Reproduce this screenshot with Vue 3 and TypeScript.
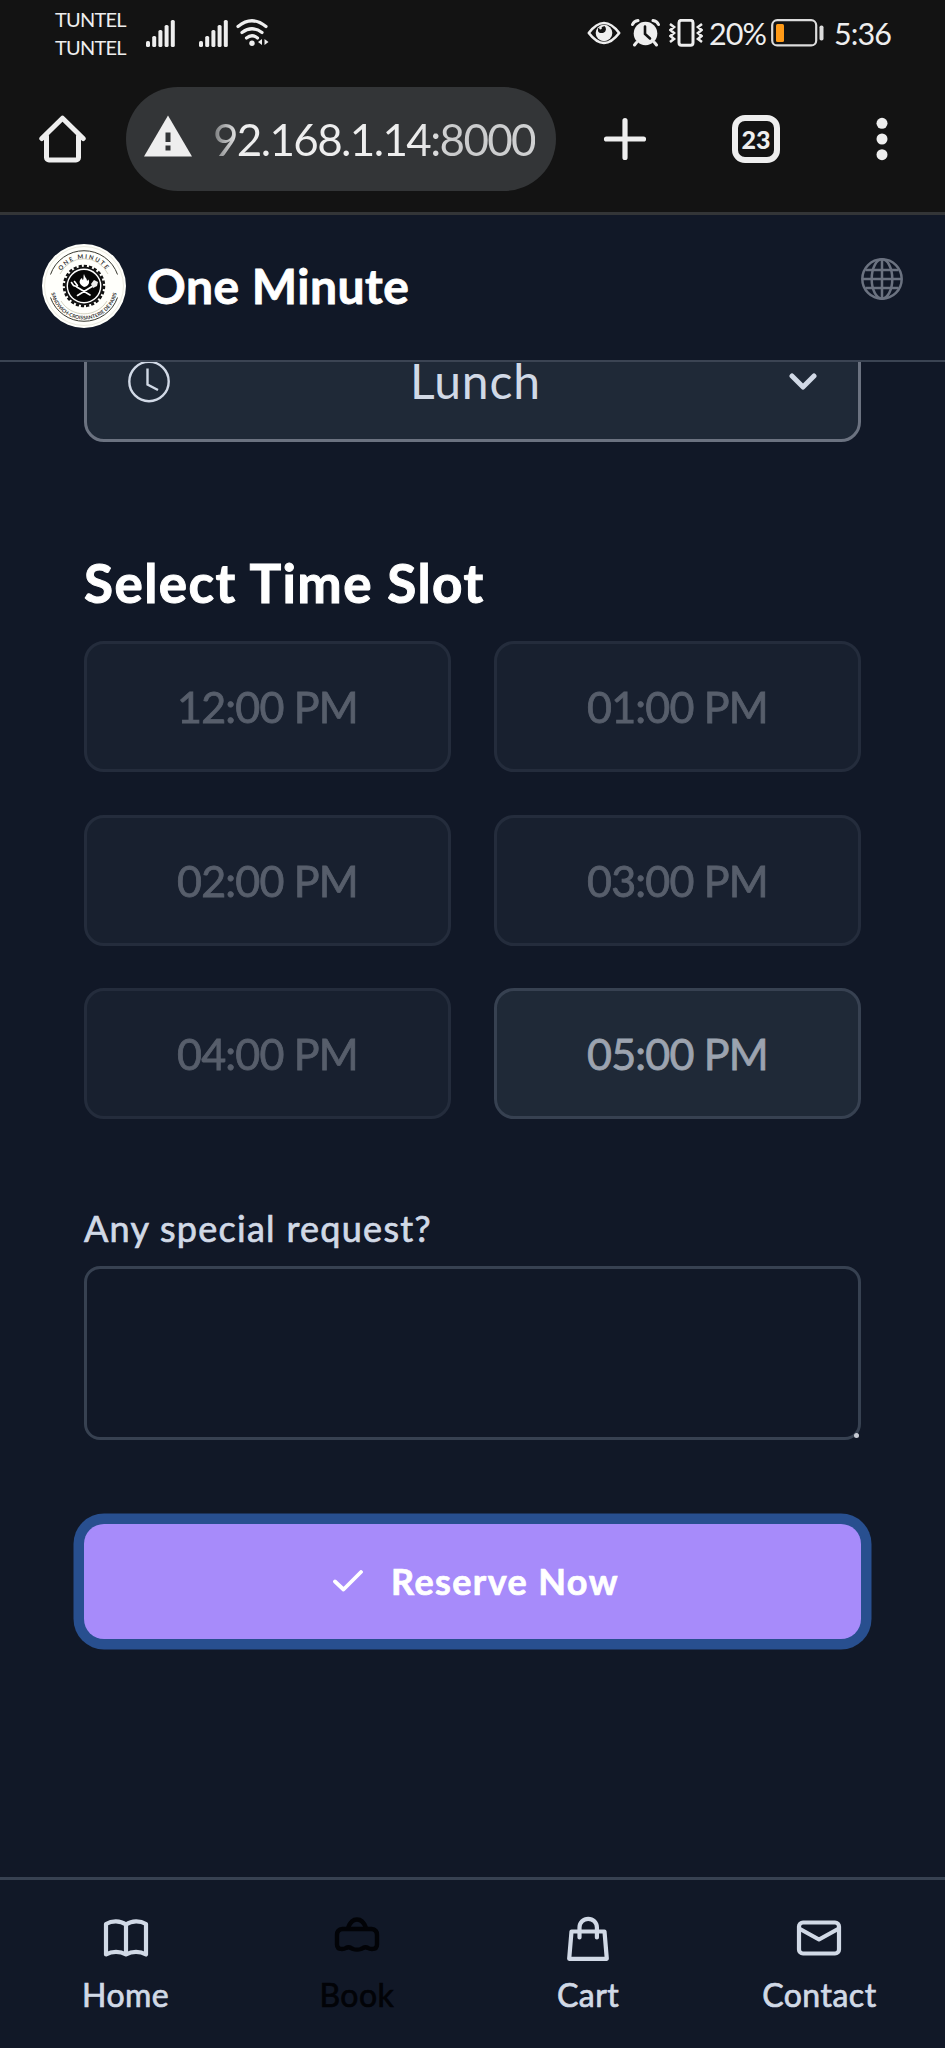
<script setup lang="ts">
import { ref } from 'vue'

interface Slot {
  label: string
  available: boolean
}

const slots: Slot[] = [
  { label: '12:00 PM', available: false },
  { label: '01:00 PM', available: false },
  { label: '02:00 PM', available: false },
  { label: '03:00 PM', available: false },
  { label: '04:00 PM', available: false },
  { label: '05:00 PM', available: true },
]

const note = ref('')
const signalBars = [6, 11, 17, 22, 27]
</script>

<template>
  <div class="screen">
    <div class="status">
      <div class="carriers"><span>TUNTEL</span><span>TUNTEL</span></div>
      <svg v-for="n in 2" :key="n" class="signal" width="29" height="27" viewBox="0 0 29 27">
        <rect v-for="(h, i) in signalBars" :key="i" :x="i * 6.2" :y="27 - h" width="4" :height="h" rx="1.6" fill="#eee" />
      </svg>
      <svg class="wifi" width="34" height="28" viewBox="0 0 34 28" fill="none" stroke="#eee" stroke-width="3.2" stroke-linecap="round">
        <path d="M2 7.5Q16 -4 30 7.5M6 13.5Q16 6 26 13.5M10.500 19Q16 14.500 21.500 19" />
        <circle cx="16" cy="24.300" r="2.700" fill="#eee" stroke="none" />
        <path d="M26 20v6l-4-3zM28.500 20v6l4-3z" fill="#eee" stroke="none" />
      </svg>
      <div class="grow"></div>
      <svg class="eye" width="34" height="24" viewBox="0 0 34 24">
        <path d="M1.800 12Q17-8 32.200 12Q17 32 1.800 12Z" fill="none" stroke="#eee" stroke-width="2.600" stroke-linejoin="round" />
        <circle cx="17" cy="12" r="8.300" fill="#eee" />
        <path d="M11 7.500a4 4 0 1 0 6.500-2.500" fill="#131313" />
        <circle cx="14" cy="9" r="3" fill="#131313" /><circle cx="13.500" cy="7" r="1.400" fill="#eee" />
      </svg>
      <svg class="alarm" width="30" height="28" viewBox="0 0 30 28">
        <circle cx="14.500" cy="14.500" r="11.800" fill="#eee" />
        <path d="M1.500 5.500Q3 2 7 1.500M22 1.500Q26 2 27.500 5.500M5.500 23.500l-2 2.500M23.500 23.500l2 2.500" fill="none" stroke="#eee" stroke-width="3" stroke-linecap="round" />
        <path d="M14 7.500v7.500l5 4.500" fill="none" stroke="#131313" stroke-width="2.600" stroke-linecap="round" />
      </svg>
      <svg class="vibrate" width="34" height="28" viewBox="0 0 34 28" fill="none" stroke="#eee">
        <rect x="10" y="1.300" width="14" height="25" rx="2.500" stroke-width="3" />
        <path d="M1 5l4 3-3.500 3 3.500 3-3.500 3 3.500 3-4 3M33 5l-4 3 3.500 3-3.500 3 3.500 3-3.500 3 4 3" stroke-width="2.600" />
      </svg>
      <span class="percent">20%</span>
      <svg class="battery" width="54" height="28" viewBox="0 0 54 28">
        <rect x="1.200" y="1.200" width="44" height="25.200" rx="5" fill="none" stroke="#dcdcdc" stroke-width="2.200" />
        <rect x="5" y="5" width="8" height="18" rx="1.500" fill="#ff9a17" />
        <rect x="48.500" y="6.500" width="4" height="15" rx="1.800" fill="#dcdcdc" />
      </svg>
      <span class="clock">5:36</span>
    </div>

    <div class="toolbar">
      <svg class="home" width="48" height="48" viewBox="0 0 48 48" fill="none" stroke="#eee" stroke-width="5" stroke-linecap="round" stroke-linejoin="round">
        <path d="M2.800 23.500L23.500 3.200 44.200 23.500M7.500 21v21.500a2.500 2.500 0 0 0 2.500 2.500h27a2.500 2.500 0 0 0 2.500-2.500V21" />
      </svg>
      <div class="address">
        <svg width="48" height="42" viewBox="0 0 48 42">
          <path d="M24 .500L48 41.500H0z" fill="#eee" />
          <path d="M21.500 17.500h5v9.500h-5zM21.500 30.500h5v5h-5z" fill="#333537" />
        </svg>
        <span class="url">92.168.1.14:8000</span>
      </div>
      <svg class="plus" width="44" height="44" viewBox="0 0 44 44" stroke="#eee" stroke-width="5.200" stroke-linecap="round">
        <path d="M22 3.500v37M3.500 22h37" />
      </svg>
      <div class="tabs">23</div>
      <svg class="dots" width="12" height="44" viewBox="0 0 12 44" fill="#eee">
        <circle cx="6" cy="6.300" r="5.500" /><circle cx="6" cy="22" r="5.500" /><circle cx="6" cy="37.700" r="5.500" />
      </svg>
    </div>

    <header class="header">
      <svg class="logo" width="84" height="84" viewBox="0 0 84 84">
        <defs>
          <path id="arc-top" d="M14.500 42a27.500 27.500 0 0 1 55 0" />
          <path id="arc-bottom" d="M8.500 42a33.500 33.500 0 0 0 67 0" />
        </defs>
        <circle cx="42" cy="42" r="42" fill="#fffffb" />
        <g fill="none" stroke-width="1">
          <path d="M8.500 30.500a35.500 35.500 0 0 1 67 0M8.500 53.500a35.500 35.500 0 0 0 67 0" stroke="#38382f" />
          <path d="M18 30a26.500 26.500 0 0 1 48 0M19 57a27 27 0 0 0 46 0" stroke="#c9c8b4" stroke-width=".8" />
          <circle cx="42" cy="42" r="39.500" stroke="#dddccc" stroke-width=".6" />
        </g>
        <circle cx="42" cy="42" r="20" fill="none" stroke="#111" stroke-width="2.500" stroke-dasharray="3.200 1.990" />
        <circle cx="42" cy="42" r="18.300" fill="#fff" stroke="#111" stroke-width="1.800" />
        <circle cx="42" cy="42" r="16" fill="#060606" />
        <g fill="none" stroke="#fff" stroke-width="1.600" stroke-linecap="round">
          <path d="M34 42.500L48 51M50 42.500L35.500 51.500M29.500 38.500l2 3 3 1M32.500 37.500l3 4" />
        </g>
        <path d="M49 40l3-4 4 2-1 4-4 2z" fill="#eee" />
        <path d="M42 43c-6-3-5-7-2-9 .5 2 1 2 1 2 1-2 0-4 1-6 1 4 3 4 3 7l1.500-1.500c2 4-1 7-4.500 7.500z" fill="#fff" />
        <text class="seal-top"><textPath href="#arc-top" startOffset="50%">ONE MINUTE</textPath></text>
        <text class="seal-bottom"><textPath href="#arc-bottom" startOffset="50%">SANDWICH-CROISSANTERIE DE PARIS</textPath></text>
      </svg>
      <h1>One Minute</h1>
      <svg class="globe" width="42" height="42" viewBox="0 0 42 42" fill="none" stroke="#6b7280" stroke-width="2.500">
        <circle cx="21" cy="21" r="19.700" />
        <ellipse cx="21" cy="21" rx="10.300" ry="19.700" />
        <path d="M21 1.300v39.400M1.300 21h39.400M4.500 12h33M4.500 30h33" />
      </svg>
    </header>

    <main class="content">
      <div class="select">
        <svg width="42" height="42" viewBox="0 0 42 42" fill="none" stroke="#d1d9e6" stroke-width="2.400">
          <circle cx="21" cy="20.500" r="19.700" />
          <path d="M19.500 7.500v16l10.500 5.500" />
        </svg>
        <span class="meal">Lunch</span>
        <svg width="28" height="18" viewBox="0 0 28 18" fill="none" stroke="#d1d9e6" stroke-width="5" stroke-linecap="round" stroke-linejoin="round">
          <path d="M3 3l11 11L25 3" />
        </svg>
      </div>

      <h2>Select Time Slot</h2>
      <div class="slots">
        <button v-for="s in slots" :key="s.label" class="slot" :class="{ off: !s.available }" :disabled="!s.available">
          {{ s.label }}
        </button>
      </div>

      <label class="ask" for="note">Any special request?</label>
      <div class="field">
        <textarea id="note" v-model="note"></textarea>
        <i class="grip"></i>
      </div>

      <button class="reserve">
        <svg width="30" height="22" viewBox="0 0 30 22" fill="none" stroke="#fff" stroke-width="3.800" stroke-linecap="round" stroke-linejoin="round">
          <path d="M2 11.500l8.500 8L28 2" />
        </svg>
        <span>Reserve Now</span>
      </button>
    </main>

    <nav class="nav">
      <a class="item">
        <svg width="46" height="46" viewBox="0 0 46 46" fill="none" stroke="currentColor" stroke-width="4.200" stroke-linejoin="round" stroke-linecap="round">
          <path d="M23 9.500C17 5.500 9 5.500 3 9v30.500c6-3.500 14-3.500 20 0 6-3.500 14-3.500 20 0V9C37 5.500 29 5.500 23 9.500zM23 9.500v30" />
        </svg>
        <span>Home</span>
      </a>
      <a class="item current">
        <svg width="46" height="46" viewBox="0 0 46 46" fill="none" stroke="currentColor" stroke-width="4.400" stroke-linejoin="round" stroke-linecap="round">
          <path d="M12 14H8.500Q3 14.500 3 20v9.500Q3 34 8 34q2.500 0 4-1 2.500-1.500 5 0 1 .5 2 1 4 1.200 8 0 1-.5 2-1 2.500-1.500 5 0 1.500 1 4 1 5 0 5-4.500V20Q43 14.500 37.500 14H34M12 14h22M14 13q3-8.500 9-8.500t9 8.500" />
        </svg>
        <span>Book</span>
      </a>
      <a class="item">
        <svg width="46" height="46" viewBox="0 0 46 46" fill="none" stroke="currentColor" stroke-width="4.200" stroke-linejoin="round" stroke-linecap="round">
          <path d="M6.500 16.500h33l2.300 27.300H4.200zM14.500 22.500V12.500a8.700 8.700 0 0 1 17.400 0v10" />
        </svg>
        <span>Cart</span>
      </a>
      <a class="item">
        <svg width="46" height="46" viewBox="0 0 46 46" fill="none" stroke="currentColor" stroke-width="4.200" stroke-linejoin="round" stroke-linecap="round">
          <rect x="3" y="7.500" width="40" height="31" rx="4" />
          <path d="M4 14l19 10.500L42 14" />
        </svg>
        <span>Contact</span>
      </a>
    </nav>
  </div>
</template>

<style>
body {
  margin: 0;
  background: #111827;
}
</style>

<style scoped>
* {
  box-sizing: border-box;
}
.screen {
  width: 945px;
  height: 2048px;
  display: flex;
  flex-direction: column;
  overflow: hidden;
  background: #111827;
  font-family: Lato, "Liberation Sans", sans-serif;
}
svg {
  display: block;
  flex: none;
}
.status {
  height: 66px;
  flex: none;
  display: flex;
  align-items: center;
  padding: 0 55px;
  background: #131313;
  color: #eee;
}
.carriers {
  width: 91px;
  display: flex;
  flex-direction: column;
  font-size: 20px;
  line-height: 28px;
  letter-spacing: -0.8px;
}
.signal {
  margin-right: 24px;
}
.signal + .signal {
  margin-right: 8px;
}
.grow {
  flex: 1;
}
.alarm {
  margin-left: 10px;
}
.vibrate {
  margin-left: 8px;
}
.percent {
  width: 62px;
  margin-left: 6px;
  font-size: 30.500px;
  white-space: nowrap;
  letter-spacing: -1px;
}
.battery {
  margin-right: 9px;
}
.clock {
  width: 56px;
  font-size: 30.500px;
  white-space: nowrap;
  letter-spacing: -0.9px;
}
.toolbar {
  height: 149px;
  flex: none;
  display: flex;
  align-items: center;
  padding: 0 57px 0 39px;
  background: #131313;
  border-bottom: 3px solid #333537;
  color: #eee;
}
.address {
  width: 430px;
  height: 104px;
  margin-left: 39px;
  padding-left: 18px;
  display: flex;
  align-items: center;
  border-radius: 52px;
  background: #333537;
}
.address svg {
  margin-top: -6px;
}
.url {
  margin-left: 21px;
  font-size: 44px;
  line-height: 60px;
  letter-spacing: -1.65px;
  white-space: nowrap;
  color: transparent;
  background: linear-gradient(90deg, #77797b 0, #eee 26px, #eee 200px, #c9cacb 240px, #d0d1d2 100%);
  -webkit-background-clip: text;
  background-clip: text;
}
.plus {
  margin-left: 47px;
}
.tabs {
  width: 48px;
  height: 48px;
  margin-left: 85px;
  border: 6px solid #eee;
  border-radius: 13px;
  font-size: 25px;
  font-weight: 900;
  line-height: 37px;
  text-align: center;
}
.dots {
  margin-left: auto;
}
.header {
  height: 147px;
  flex: none;
  display: flex;
  align-items: center;
  padding: 0 42px 4px;
  border-bottom: 2px solid #3b4453;
}
.seal-top,
.seal-bottom {
  text-anchor: middle;
  font-weight: 700;
  fill: #333;
}
.seal-top {
  font-size: 6px;
  letter-spacing: 1.6px;
}
.seal-bottom {
  font-size: 5px;
}
h1 {
  margin: 0 0 0 21px;
  font-size: 48px;
  line-height: 60px;
  font-weight: 700;
  letter-spacing: 0.5px;
  color: #fff;
  -webkit-text-stroke: 0.8px;
}
.globe {
  margin: -14px 0 0 auto;
}
.content {
  flex: 1;
  min-height: 0;
  overflow: hidden;
  display: flex;
  flex-direction: column;
  padding: 0 84px;
}
.select {
  flex: none;
  height: 121px;
  margin-top: -41px;
  padding: 0 41px;
  display: flex;
  align-items: center;
  justify-content: space-between;
  border: 3px solid #6b7280;
  border-radius: 20px;
  background: #1f2937;
  color: #d1d9e6;
  font-size: 48px;
  line-height: 60px;
  letter-spacing: 0.9px;
}
.meal {
  margin: -2px 8px 0 0;
}
h2 {
  margin: 109px 0 26px;
  font-size: 53px;
  line-height: 64px;
  font-weight: 700;
  letter-spacing: 1.45px;
  color: #fff;
  -webkit-text-stroke: 1px;
}
.slots {
  display: grid;
  grid-template-columns: 1fr 1fr;
  grid-auto-rows: 131px;
  gap: 42.5px 43px;
}
button {
  margin: 0;
  padding: 0;
  font-family: inherit;
}
.slot {
  border: 3px solid #374151;
  border-radius: 20px;
  background: #1f2937;
  color: #9ca3af;
  font-size: 43px;
  letter-spacing: -0.8px;
  -webkit-text-stroke: 0.8px;
}
.off {
  opacity: 0.5;
}
.ask {
  margin: 85px 0 14px;
  font-size: 36px;
  line-height: 48px;
  letter-spacing: 1.28px;
  color: #d1d9e6;
  -webkit-text-stroke: 0.7px;
}
.field {
  position: relative;
  flex: none;
  height: 174px;
}
textarea {
  display: block;
  width: 100%;
  height: 100%;
  padding: 16px;
  border: 3px solid #374151;
  border-radius: 16px;
  background: transparent;
  color: #d1d9e6;
  font: inherit;
  resize: none;
}
.grip {
  position: absolute;
  right: 2px;
  bottom: 2px;
  width: 5px;
  height: 5px;
  border-radius: 50%;
  background: #c8ccd4;
}
.reserve {
  flex: none;
  height: 115px;
  margin-top: 84px;
  padding: 0 0 2px 7px;
  display: flex;
  align-items: center;
  justify-content: center;
  gap: 28px;
  border: 0;
  border-radius: 20px;
  background: #a78bfa;
  box-shadow: 0 0 0 10.500px #284f8f;
  color: #fff;
  font-size: 36px;
  font-weight: 700;
  letter-spacing: 1.4px;
  -webkit-text-stroke: 0.7px;
}
.nav {
  height: 171px;
  flex: none;
  display: flex;
  padding: 0 10px;
  border-top: 3px solid #374151;
}
.item {
  flex: 1;
  display: flex;
  flex-direction: column;
  align-items: center;
  padding-top: 35px;
  color: #d1d9e6;
  font-size: 32px;
  line-height: 40px;
  letter-spacing: 0.5px;
}
.item span {
  margin-top: 14px;
  -webkit-text-stroke: 0.7px;
}
.current {
  color: #020307;
}
</style>
